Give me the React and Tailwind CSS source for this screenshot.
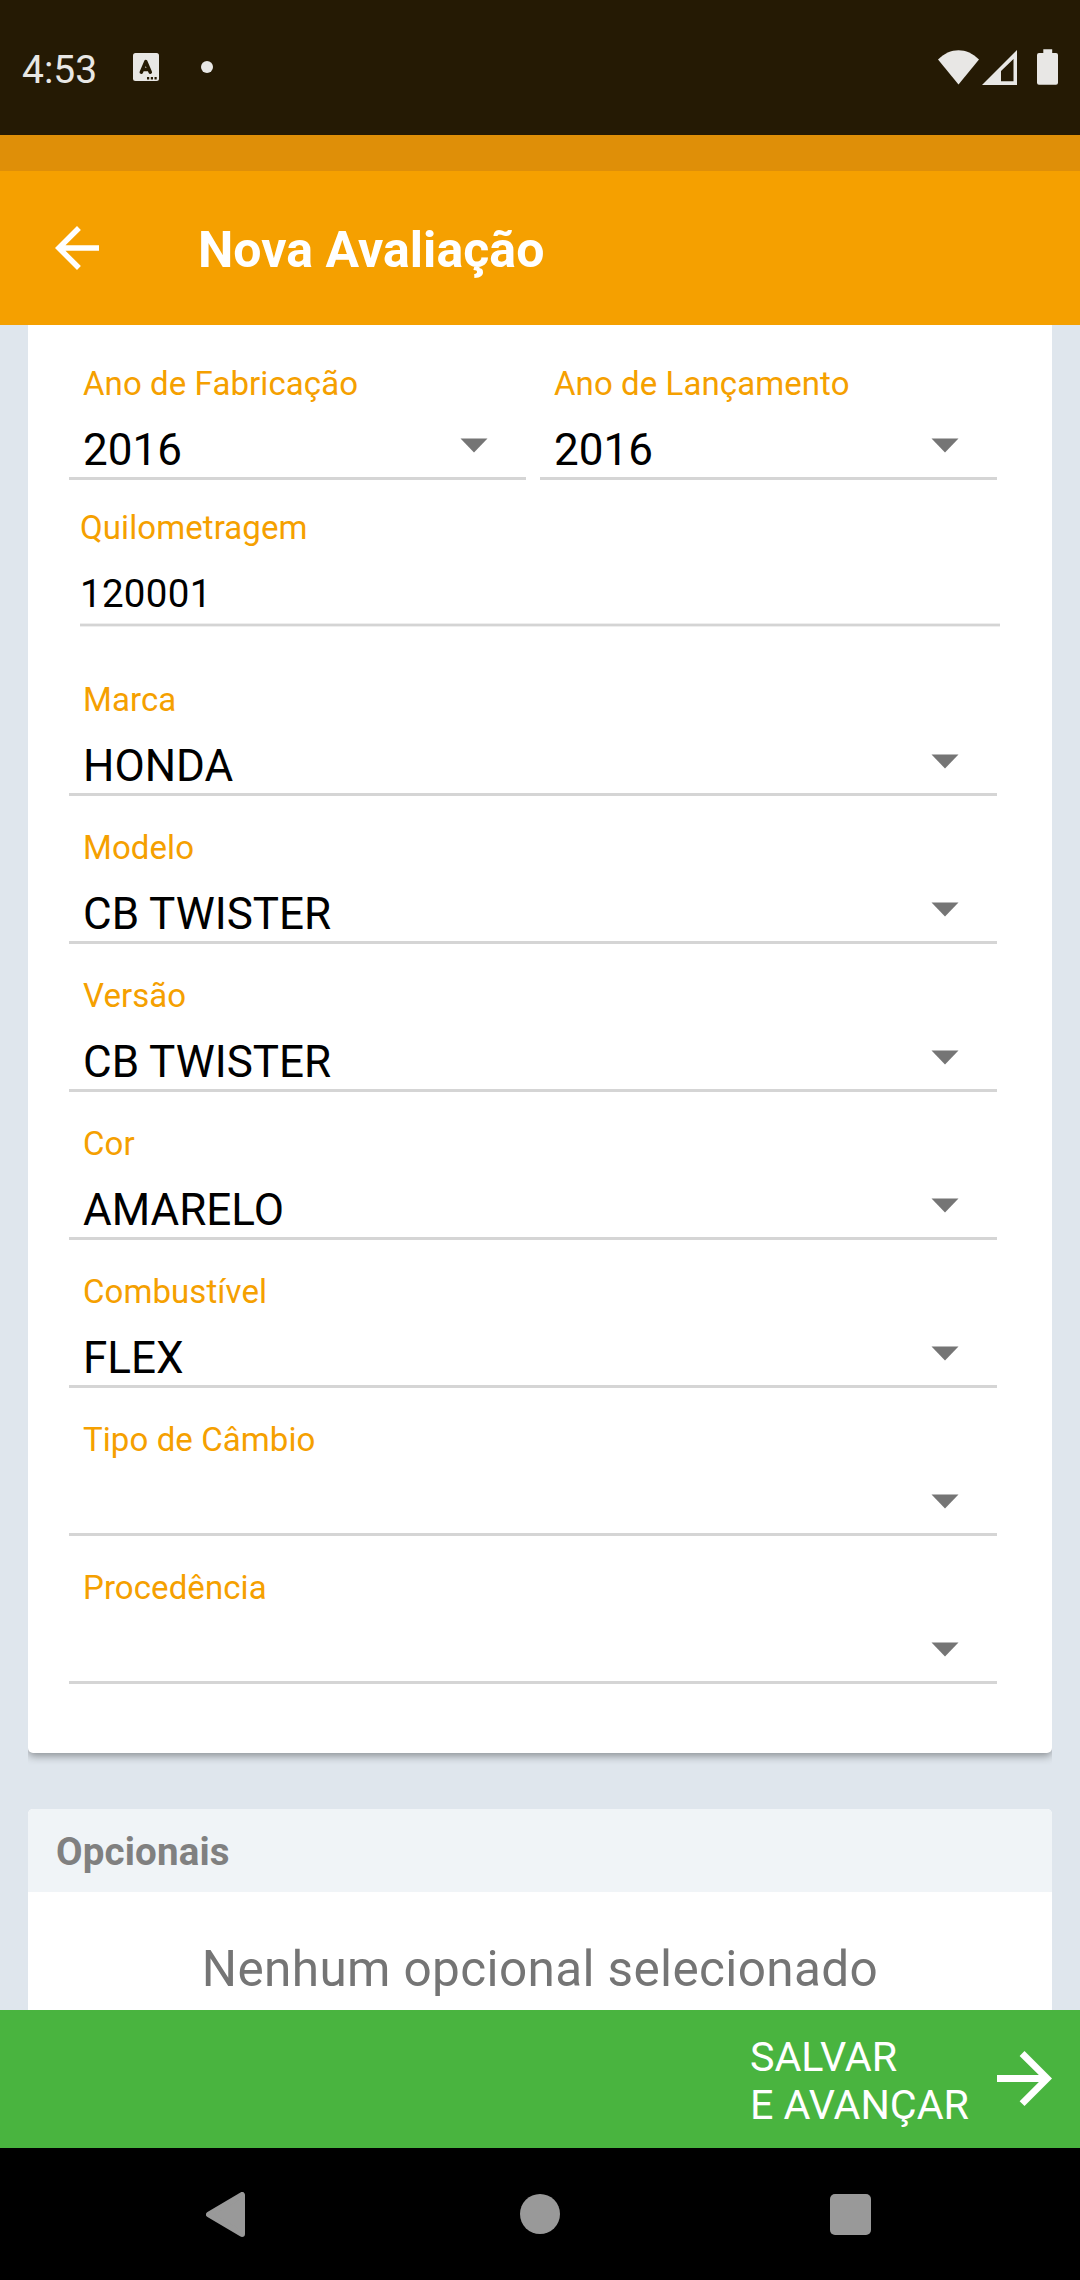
import React from "react";

function Caret() {
  return (
    <svg width="28" height="15" viewBox="0 0 28 15" className="block shrink-0">
      <path d="M0.5 0.5H27.5L14 14.5Z" fill="#757575" />
    </svg>
  );
}

function SelectField({ label, value }) {
  return (
    <div className="h-[148px] min-w-0 flex-1 border-b-[3px] border-[#d5d5d5] pt-[32px]">
      <div className="pl-[14px] text-[33px] leading-[40px] tracking-[0.08px] text-[#f5a000]">{label}</div>
      <div className="mt-[20px] flex h-[52px] items-start justify-between pl-[14px] pr-[38px]">
        <span className="text-[44px] leading-[52px] text-black">{value}</span>
        <span className="pt-[14px]">
          <Caret />
        </span>
      </div>
    </div>
  );
}

function StatusBar() {
  return (
    <div className="flex h-[135px] shrink-0 items-start bg-[#251a04] pl-[22px] pr-[21px] text-[#e8e7e5]">
      <span className="mt-[46px] w-[111px] text-[39px] leading-[48px]">4:53</span>
      <svg width="26" height="28" viewBox="0 0 26 28" className="mt-[53px] block">
        <rect width="26" height="28" rx="2.5" fill="#e8e7e5" />
        <path d="M8.3 19.2L12.800 8.600L17.300 19.2M10 16.4H16" fill="none" stroke="#251a04" strokeWidth="3.5" strokeLinecap="round" strokeLinejoin="round" />
        <path d="M14 24h2.2v2.4H14zM17.8 24H20v2.4h-2.200zM21.500 24h2.200v2.400h-2.200z" fill="#251a04" />
      </svg>
      <span className="ml-[42px] mt-[61px] h-3 w-3 rounded-full bg-[#e8e7e5]" />
      <svg width="42" height="35" viewBox="0 0 42 35" className="ml-auto mt-[50px] block">
        <path d="M0 9.500C12 -3 29 -3 41 9.500L20.500 34.500Z" fill="#e8e7e5" />
      </svg>
      <svg width="35" height="35" viewBox="0 0 35 35" className="ml-[2px] mt-[50px] block">
        <path fillRule="evenodd" d="M35 0V35H0ZM31.500 9L19 21V31.300H31.500Z" fill="#e8e7e5" />
      </svg>
      <svg width="22" height="36" viewBox="0 0 22 36" className="ml-5 mt-[49px] block">
        <path d="M6.300 0.300H15.200V4H19a2 2 0 0 1 2 2V33.700a2 2 0 0 1-2 2H2a2 2 0 0 1-2-2V6a2 2 0 0 1 2-2H6.300Z" fill="#e8e7e5" />
      </svg>
    </div>
  );
}

const fields = [
  ["Marca", "HONDA"],
  ["Modelo", "CB TWISTER"],
  ["Versão", "CB TWISTER"],
  ["Cor", "AMARELO"],
  ["Combustível", "FLEX"],
  ["Tipo de Câmbio", ""],
  ["Procedência", ""],
];

export default function App() {
  return (
    <div className="flex h-[2280px] w-[1080px] flex-col overflow-hidden bg-[#dfe6ed] font-[Roboto,sans-serif]">
      <StatusBar />
      <div className="h-9 shrink-0 bg-[#df8f08]" />
      <header className="flex h-[154px] shrink-0 items-center bg-[#f5a000] text-white">
        <svg width="44" height="44" viewBox="0 0 44 44" className="ml-[55px] block">
          <path d="M44 19.250H10.500L25.900 3.900L22 0L0 22L22 44L25.900 40.100L10.500 24.750H44Z" fill="currentColor" />
        </svg>
        <h1 className="ml-[99px] mt-1 text-[50px] font-bold leading-[60px] tracking-[0.06px]">Nova Avaliação</h1>
      </header>

      <main className="flex min-h-0 flex-1 flex-col overflow-hidden px-7">
        <div className="h-[1440px] shrink-0 overflow-hidden">
          <section className="h-[1428px] rounded-b-[5px] bg-white pl-[41px] pr-[55px] pt-[7px] shadow-[0_3px_8px_rgba(0,0,0,0.38)]">
            <div className="flex gap-[14px]">
              <SelectField label="Ano de Fabricação" value="2016" />
              <SelectField label="Ano de Lançamento" value="2016" />
            </div>
            <div className="-mr-[3px] ml-[11px] h-[168px]">
              <div className="pt-[28px] text-[33px] leading-[40px] tracking-[0.08px] text-[#f5a000]">Quilometragem</div>
              <div className="mt-[22px] h-[53px] text-[38.5px] leading-[48px] tracking-[0.3px] text-black">120001</div>
              <div className="h-[4px] border-y border-[#eeeeee] bg-[#d4d4d4]" />
            </div>
            {fields.map(([label, value]) => (
              <SelectField key={label} label={label} value={value} />
            ))}
          </section>
        </div>

        <section className="mt-11 h-[201px] shrink-0 overflow-hidden rounded-t-[5px] bg-white">
          <h2 className="h-[83px] bg-[#f0f4f7] pl-7 pt-[19px] text-[38.5px] font-bold leading-[48px] tracking-[0.16px] text-[#808080]">Opcionais</h2>
          <p className="pt-[47px] text-center text-[49.5px] leading-[60px] tracking-[0.36px] text-[#757575]">Nenhum opcional selecionado</p>
        </section>
      </main>

      <button className="flex h-[138px] shrink-0 items-center justify-end bg-[#49b43f] pr-7 text-left text-white">
        <span className="mr-[28px] mt-[3px] text-[41.25px] leading-[48px]">
          SALVAR
          <br />E AVANÇAR
        </span>
        <svg width="55" height="55" viewBox="0 0 44 44" className="-mt-px block">
          <path d="M0 19.250H33.500L18.100 3.900L22 0L44 22L22 44L18.100 40.100L33.500 24.750H0Z" fill="currentColor" />
        </svg>
      </button>

      <nav className="flex h-[132px] shrink-0 items-start bg-black pl-[206px] pt-[44px]">
        <svg width="39" height="46" viewBox="0 0 39 46" className="block">
          <path d="M3 22.500L36 3V42Z" fill="#999999" stroke="#999999" strokeWidth="6" strokeLinejoin="round" />
        </svg>
        <span className="ml-[275px] mt-[2px] h-10 w-10 rounded-full bg-[#999999]" />
        <span className="ml-[270px] mt-[2px] h-[41px] w-[41px] rounded-[5px] bg-[#999999]" />
      </nav>
    </div>
  );
}
